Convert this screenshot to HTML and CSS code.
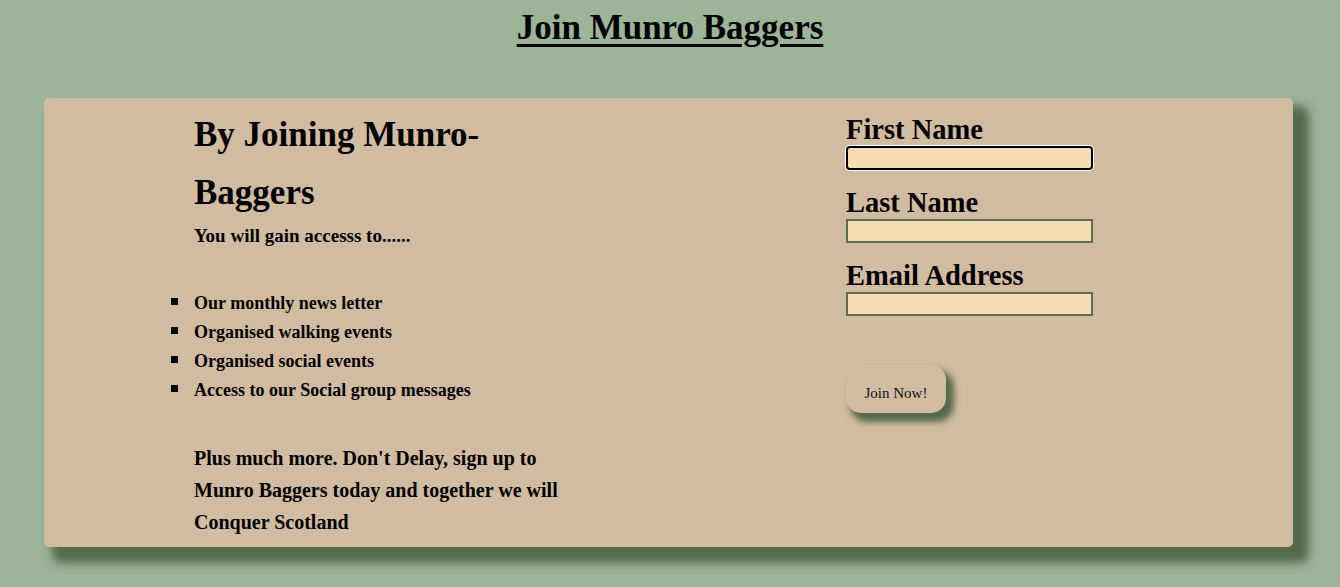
FILE: index.html
```html
<!DOCTYPE html>
<html lang="en">
<head>
<meta charset="utf-8">
<title>Join Munro Baggers</title>
<link rel="stylesheet" href="styles.css">
</head>
<body>
  <h1 class="page-title">Join Munro Baggers</h1>
  <main class="card">
    <section class="info">
      <h2 class="info-heading">By Joining Munro-Baggers</h2>
      <p class="info-lead">You will gain accesss to......</p>
      <ul class="benefits">
        <li>Our monthly news letter</li>
        <li>Organised walking events</li>
        <li>Organised social events</li>
        <li>Access to our Social group messages</li>
      </ul>
      <p class="info-more">Plus much more. Don't Delay, sign up to Munro Baggers today and together we will Conquer Scotland</p>
    </section>
    <form class="signup">
      <label class="field-label" for="first">First Name</label>
      <input class="field-input field-focus" id="first" type="text">
      <label class="field-label" for="last">Last Name</label>
      <input class="field-input" id="last" type="text">
      <label class="field-label" for="email">Email Address</label>
      <input class="field-input" id="email" type="email">
      <button class="join-btn" type="button">Join Now!</button>
    </form>
  </main>
</body>
</html>
```
FILE: styles.css
```css
* { box-sizing: border-box; }

html {
  background: #9cb497;
}

body {
  margin: 0;
  padding-bottom: 40px;
  background: #9cb497;
  font-family: "Liberation Serif", "Times New Roman", serif;
  color: #000;
}

.page-title {
  margin: 0;
  padding-top: 8px;
  font-size: 35px;
  line-height: 40px;
  font-weight: bold;
  text-align: center;
  text-decoration: underline;
  text-decoration-thickness: 3px;
  text-underline-offset: 5px;
}

.card {
  margin: 50px 47px 0 44px;
  background: #d1bca1;
  border-radius: 5px;
  box-shadow: 12px 12px 10px 4px #55694c;
  display: flex;
  align-items: flex-start;
  padding: 8px 0 9px 150px;
}

.info {
  width: 380px;
}

.info-heading {
  margin: 0;
  font-size: 35px;
  line-height: 58px;
  font-weight: bold;
}

.info-lead {
  margin: 0;
  font-size: 19px;
  line-height: 27px;
  font-weight: bold;
}

.benefits {
  list-style: none;
  margin: 40px 0 0;
  padding: 0;
}

.benefits li {
  font-size: 18px;
  line-height: 29px;
  font-weight: bold;
}

.benefits li::before {
  content: "";
  display: inline-block;
  width: 7px;
  height: 7px;
  background: #000;
  margin-left: -23px;
  margin-right: 16px;
  vertical-align: 4px;
}

.info-more {
  margin: 37px 0 0;
  font-size: 20px;
  line-height: 32px;
  font-weight: bold;
}

.signup {
  margin-left: 272px;
  padding-top: 8px;
  display: flex;
  flex-direction: column;
  align-items: flex-start;
  width: 247px;
}

.field-label {
  display: block;
  font-size: 28.5px;
  line-height: 32px;
  font-weight: bold;
}

.field-input {
  display: block;
  width: 247px;
  height: 24px;
  margin: 0 0 17px;
  background: #f5deb3;
  border: 2px solid #5a6e50;
  border-radius: 0;
  padding: 0 4px;
  outline: none;
}

.field-focus {
  border-color: #000;
  border-radius: 4px;
  box-shadow: 0 0 0 1px #fff;
}

.join-btn {
  margin-top: 32px;
  width: 100px;
  height: 48px;
  border: none;
  border-radius: 15px;
  padding: 8px 0 0;
  background: #d1bca1;
  box-shadow: 6px 7px 6px 2px #55694c;
  font-family: "Liberation Serif", "Times New Roman", serif;
  font-size: 15px;
  color: #111;
  cursor: pointer;
}
```
